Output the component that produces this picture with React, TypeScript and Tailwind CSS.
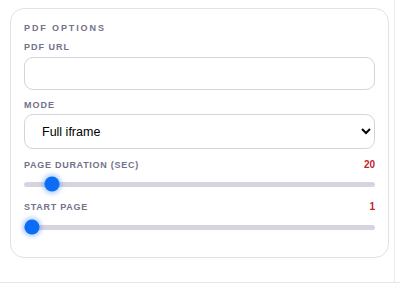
import { useState } from 'react';

function Slider({ pct }: { pct: number }) {
    return (
        <div className="relative h-[14px] flex items-center">
            <div className="w-full h-[5px] rounded-full bg-[#d5d5df]" />
            <div
                className="absolute top-1/2 w-[15px] h-[15px] -translate-x-1/2 -translate-y-1/2 rounded-full bg-[#0b6cf5] shadow-[0_0_4px_2px_rgba(11,108,245,0.35)]"
                style={{ left: `calc((100% - 15px) * ${pct / 100} + 7.5px)` }}
            />
        </div>
    );
}

export default function App() {
    const [url, setUrl] = useState('');
    const [mode, setMode] = useState('full');

    return (
        <div className="w-[400px] h-[288px] bg-white font-['Liberation_Sans',Arial,sans-serif]">
            <div className="h-[283px] border-b border-[#e6e6e6]">
                <div className="w-[395px] h-full border-r border-[#ececec] pl-[10px] pr-[5px] pt-[8px]">
                    <div className="rounded-[14px] border border-[#e2e2e6] px-[13px] pt-[14px] pb-[23px]">
                        <div className="text-[9px] font-bold tracking-[0.21em] text-[#72728a] leading-[10px]">PDF OPTIONS</div>

                        <div className="mt-[9px] text-[9px] font-bold tracking-[0.11em] text-[#72728a] leading-[10px]">PDF URL</div>
                        <input
                            type="text"
                            value={url}
                            onChange={(e) => setUrl(e.target.value)}
                            className="mt-[5px] w-full h-[33px] rounded-[9px] border border-[#d4d4dc] bg-white px-3 text-sm outline-none"
                        />

                        <div className="mt-[10px] text-[9px] font-bold tracking-[0.11em] text-[#72728a] leading-[10px]">MODE</div>
                        <select
                            value={mode}
                            onChange={(e) => setMode(e.target.value)}
                            className="mt-[4px] w-full h-[35px] rounded-[9px] border border-[#d4d4dc] bg-white pl-[13px] pr-2 text-[12.5px] text-black font-['Liberation_Sans',Arial,sans-serif]"
                        >
                            <option value="full">Full iframe</option>
                            <option value="pages">Page by page</option>
                        </select>

                        <div className="mt-[11px] flex justify-between items-center leading-[10px]">
                            <span className="text-[9px] font-bold tracking-[0.08em] text-[#72728a]">PAGE DURATION (SEC)</span>
                            <span className="text-[10px] font-bold text-[#c0262d]">20</span>
                        </div>
                        <div className="mt-[7px]">
                            <Slider pct={6} />
                        </div>

                        <div className="mt-[11px] flex justify-between items-center leading-[10px]">
                            <span className="text-[9px] font-bold tracking-[0.08em] text-[#72728a]">START PAGE</span>
                            <span className="text-[10px] font-bold text-[#c0262d]">1</span>
                        </div>
                        <div className="mt-[8px]">
                            <Slider pct={0} />
                        </div>
                    </div>
                </div>
            </div>
        </div>
    );
}
